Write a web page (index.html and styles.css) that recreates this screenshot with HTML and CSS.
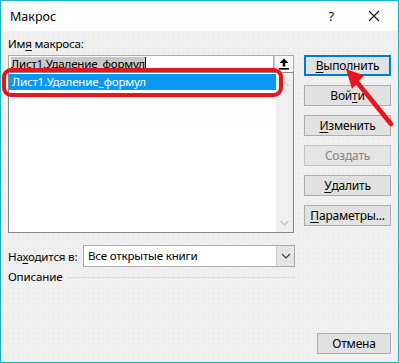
FILE: index.html
```
<!DOCTYPE html>
<html lang="ru">
<head>
<meta charset="utf-8">
<title>Макрос</title>
<link rel="stylesheet" href="styles.css">
</head>
<body>
<div class="window">
  <div class="titlebar">
    <span class="title">Макрос</span>
    <span class="help">?</span>
    <span class="close"><svg width="12" height="12" viewBox="0 0 12 12"><path d="M1 1 L11 11 M11 1 L1 11" stroke="#111" stroke-width="1.1" fill="none"/></svg></span>
  </div>
  <div class="body">
    <div class="main">
      <div class="left">
        <div class="label">Им<u>я</u> макроса:</div>
        <div class="namebox">
          <div class="input"><span class="sel">Лист1.Удаление_формул</span><span class="caret"></span></div>
          <div class="upbtn"><svg width="12" height="12" viewBox="0 0 12 12"><path d="M6 0.5 L10.5 5 L7.3 5 L7.3 8.5 L4.7 8.5 L4.7 5 L1.5 5 Z" fill="#000"/><rect x="1" y="10" width="10" height="1.6" fill="#000"/></svg></div>
        </div>
        <div class="list">
          <div class="items">
            <div class="item selected">Лист1.Удаление_формул</div>
          </div>
          <div class="scroll">
            <svg width="9" height="6" viewBox="0 0 9 6"><path d="M0.5 5 L4.5 1 L8.5 5" stroke="#c2c2c2" stroke-width="1.2" fill="none"/></svg>
            <svg width="9" height="6" viewBox="0 0 9 6"><path d="M0.5 1 L4.5 5 L8.5 1" stroke="#c2c2c2" stroke-width="1.2" fill="none"/></svg>
          </div>
        </div>
      </div>
      <div class="buttons">
        <div class="btn default"><u>В</u>ыполнить</div>
        <div class="btn">Вой<u>т</u>и</div>
        <div class="btn"><u>И</u>зменить</div>
        <div class="btn disabled">Создать</div>
        <div class="btn"><u>У</u>далить</div>
        <div class="btn"><u>П</u>араметры...</div>
      </div>
    </div>
    <div class="location">
      <span class="loc-label">На<u>х</u>одится в:</span>
      <div class="dropdown">
        <span class="dd-text">Все открытые книги</span>
        <span class="dd-arrow"><svg width="10" height="6" viewBox="0 0 10 6"><path d="M1 1 L5 5 L9 1" stroke="#333" stroke-width="1.1" fill="none"/></svg></span>
      </div>
    </div>
    <div class="desc">
      <span>Описание</span>
      <span class="rule"></span>
    </div>
    <div class="footer">
      <div class="btn cancel">Отмена</div>
    </div>
  </div>
  <div class="highlight"></div>
  <svg class="arrow" width="399" height="363" viewBox="0 0 399 363">
    <line x1="391" y1="124" x2="356" y2="81" stroke="#e8151c" stroke-width="4.6" stroke-linecap="round"/>
    <polygon points="346,69 364,75.5 352,89" fill="#e8151c"/>
  </svg>
</div>
</body>
</html>
```
FILE: styles.css
```
* { box-sizing: border-box; }
html, body { margin: 0; padding: 0; }
body {
  font-family: "Noto Sans", "Open Sans", sans-serif;
  font-size: 11.6px;
  letter-spacing: -0.2px;
  color: #000;
  background: #fff;
}
u { text-decoration: underline; text-underline-offset: 2px; text-decoration-thickness: 1px; }
.window {
  position: relative;
  width: 399px;
  height: 363px;
  border: 1px solid #19b4c4;
  display: flex;
  flex-direction: column;
  background: #f0f0f0;
}
.titlebar {
  height: 30px;
  background: #fff;
  display: flex;
  align-items: center;
  padding-left: 9px;
  flex: none;
}
.title { flex: 1; font-size: 12.5px; letter-spacing: 0; }
.help { font-size: 13px; margin-right: 34px; color: #111; }
.close { width: 12px; height: 12px; margin-right: 18px; display: flex; }
.body {
  flex: 1;
  display: flex;
  flex-direction: column;
  padding: 5px 7px 8px 7px;
  background-color: #f0f0f0;
  background-image: radial-gradient(circle, #e2e2e2 0.6px, transparent 0.9px);
  background-size: 5px 5px;
}
.main { display: flex; gap: 10px; }
.left { width: 286px; display: flex; flex-direction: column; }
.label { line-height: 16px; height: 16px; margin-bottom: 3px; }
.namebox { display: flex; height: 17px; }
.input {
  width: 266px;
  height: 17px;
  border: 1px solid #a9a9a9;
  border-bottom: none;
  background: #fff;
  display: flex;
  align-items: center;
  padding-left: 2px;
}
.sel { background: #c8c8c8; line-height: 14px; }
.caret { width: 1px; height: 14px; background: #000; }
.upbtn {
  width: 20px;
  height: 17px;
  border: 1px solid #a9a9a9;
  border-left: 1px solid #c9c9c9;
  border-bottom: none;
  background: #f7f7f7;
  display: flex;
  align-items: center;
  justify-content: center;
}
.list {
  height: 161px;
  border: 1px solid #828790;
  background: #fff;
  display: flex;
}
.items { flex: 1; padding-top: 1px; }
.item { height: 16px; line-height: 16px; padding-left: 3px; }
.item.selected { background: #0a98f7; color: #fff; }
.scroll {
  width: 17px;
  background: #f0f0f0;
  display: flex;
  flex-direction: column;
  justify-content: space-between;
  align-items: center;
  padding: 8px 0 6px;
}
.buttons {
  width: 87px;
  margin-top: 19px;
  display: flex;
  flex-direction: column;
  gap: 9px;
}
.btn {
  height: 21px;
  background: #e1e1e1;
  border: 1px solid #adadad;
  display: flex;
  align-items: center;
  justify-content: center;
  line-height: 16px;
  font-size: 12px;
}
.btn.default { border: 2px solid #0078d7; }
.btn.disabled { color: #838383; background: #e5e5e5; border-color: #c4c4c4; }
.location {
  display: flex;
  align-items: center;
  margin-top: 12px;
  width: 287px;
}
.loc-label { width: 75px; }
.dropdown {
  flex: 1;
  height: 22px;
  border: 1px solid #a9a9a9;
  background: #fff;
  display: flex;
}
.dd-text { flex: 1; padding-left: 4px; line-height: 20px; }
.dd-arrow {
  width: 18px;
  background: #e5e5e5;
  border-left: 1px solid #cfcfcf;
  display: flex;
  align-items: center;
  justify-content: center;
}
.desc {
  display: flex;
  align-items: center;
  margin-top: 2px;
  width: 287px;
  line-height: 16px;
}
.rule { flex: 1; height: 1px; background: #dadada; margin-left: 6px; }
.footer {
  margin-top: auto;
  display: flex;
  justify-content: flex-end;
}
.btn.cancel { width: 74px; }
.highlight {
  position: absolute;
  left: 1px;
  top: 67px;
  width: 281px;
  height: 29px;
  border: 4px solid #e8151c;
  border-radius: 9px;
}
.arrow {
  position: absolute;
  left: -1px;
  top: -1px;
  pointer-events: none;
}
```
